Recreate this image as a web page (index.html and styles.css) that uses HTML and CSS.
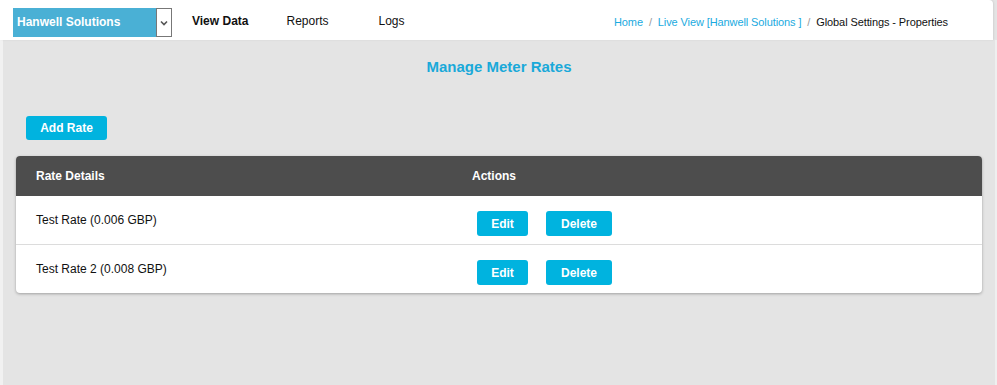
FILE: index.html
```html
<!DOCTYPE html>
<html lang="en">
<head>
    <meta charset="UTF-8">
    <meta name="viewport" content="width=device-width, initial-scale=1.0">
    <title>Manage Meter Rates</title>
    <link rel="stylesheet" href="styles.css">
</head>
<body>
    <div class="page">
        <div class="topBar">
            <div class="siteSelect">
                <span class="siteName">Hanwell Solutions</span>
                <span class="siteArrow">
                    <svg width="8" height="6" viewBox="0 0 8 6"><path d="M1 1.5 L4 4.5 L7 1.5" fill="none" stroke="#555" stroke-width="1.6"/></svg>
                </span>
            </div>
            <nav class="mainNav">
                <a href="#" class="navLink active">View Data</a>
                <a href="#" class="navLink">Reports</a>
                <a href="#" class="navLink">Logs</a>
            </nav>
            <div class="breadcrumb">
                <a href="#">Home</a>
                <span class="sep">/</span>
                <a href="#">Live View [Hanwell Solutions ]</a>
                <span class="sep">/</span>
                <span class="current">Global Settings - Properties</span>
            </div>
        </div>

        <div class="content">
            <h1 class="pageTitle">Manage Meter Rates</h1>

            <button type="button" class="blueButton addButton">Add Rate</button>

            <div class="rateTable">
                <div class="tableRow tableHead">
                    <div class="colDetails">Rate Details</div>
                    <div class="colActions">Actions</div>
                </div>
                <div class="tableRow">
                    <div class="colDetails">Test Rate (0.006 GBP)</div>
                    <div class="colActions">
                        <button type="button" class="blueButton editButton">Edit</button>
                        <button type="button" class="blueButton deleteButton">Delete</button>
                    </div>
                </div>
                <div class="tableRow">
                    <div class="colDetails">Test Rate 2 (0.008 GBP)</div>
                    <div class="colActions">
                        <button type="button" class="blueButton editButton">Edit</button>
                        <button type="button" class="blueButton deleteButton">Delete</button>
                    </div>
                </div>
            </div>
        </div>
    </div>
</body>
</html>
```

FILE: styles.css
```css
/* styles.css */
body {
    font-family: "Liberation Sans", Arial, sans-serif;
    background-color: #e4e4e4;
    margin: 0;
    padding: 0;
}

.page {
    width: 993px;
    min-height: 385px;
    border-left: 3px solid #f1f1f1;
    box-sizing: border-box;
    position: relative;
}

.page::after {
    content: "";
    position: absolute;
    top: 40px;
    right: -4px;
    width: 2px;
    bottom: 0;
    background-color: #efefef;
}

.topBar {
    display: flex;
    align-items: center;
    height: 40px;
    margin-left: -3px;
    background-color: #fff;
    border-top-right-radius: 4px;
    box-shadow: 1px 0 2px rgba(0, 0, 0, 0.08);
}

.siteSelect {
    display: flex;
    height: 29px;
    margin-left: 13px;
    margin-top: 5px;
}

.siteName {
    width: 139px;
    padding-left: 4px;
    background-color: #4ab0d5;
    color: #fff;
    font-weight: bold;
    font-size: 12px;
    line-height: 29px;
}

.siteArrow {
    width: 14px;
    border: 1px solid #777;
    background-color: #fff;
    display: flex;
    align-items: center;
    justify-content: center;
}

.mainNav {
    display: flex;
    margin-left: 20px;
    padding-top: 2px;
}

.navLink {
    color: #111;
    font-size: 12px;
    text-decoration: none;
    margin-right: 38px;
}

.navLink + .navLink {
    margin-right: 50px;
}

.navLink.active {
    font-weight: bold;
}

.breadcrumb {
    margin-left: auto;
    margin-right: 45px;
    padding-top: 3px;
    font-size: 11px;
    letter-spacing: -0.1px;
}

.breadcrumb a {
    color: #1aaae0;
    text-decoration: none;
}

.breadcrumb .sep {
    color: #999;
    margin: 0 3px;
}

.breadcrumb .current {
    color: #111;
}

.content {
    padding: 17px 11px 0 13px;
}

.pageTitle {
    margin: 0;
    text-align: center;
    color: #1aa9d9;
    font-size: 15px;
    font-weight: bold;
    line-height: 20px;
}

.blueButton {
    background-color: #00b3df;
    color: #fff;
    border: none;
    border-radius: 3px;
    font-family: inherit;
    font-weight: bold;
    font-size: 12px;
    cursor: pointer;
    padding: 0;
}

.blueButton:hover {
    background-color: #0096bd;
}

.addButton {
    display: block;
    width: 81px;
    height: 24px;
    margin: 39px 0 0 10px;
}

.rateTable {
    margin-top: 16px;
    background-color: #fff;
    border-radius: 4px;
    overflow: hidden;
    box-shadow: 0 1px 3px rgba(0, 0, 0, 0.3);
}

.tableRow {
    display: flex;
    align-items: center;
    height: 48px;
    font-size: 12px;
    color: #111;
}

.tableRow + .tableRow {
    border-top: 1px solid #dcdcdc;
}

.tableHead {
    height: 40px;
    background-color: #4d4d4d;
    color: #fff;
    font-weight: bold;
}

.tableHead + .tableRow {
    border-top: none;
}

.colDetails {
    width: 436px;
    padding-left: 20px;
}

.colActions {
    display: flex;
    gap: 18px;
    margin-left: 5px;
    margin-top: 7px;
}

.tableHead .colActions {
    margin-left: 0;
    margin-top: 0;
}

.editButton {
    width: 51px;
    height: 25px;
}

.deleteButton {
    width: 66px;
    height: 25px;
}
```
